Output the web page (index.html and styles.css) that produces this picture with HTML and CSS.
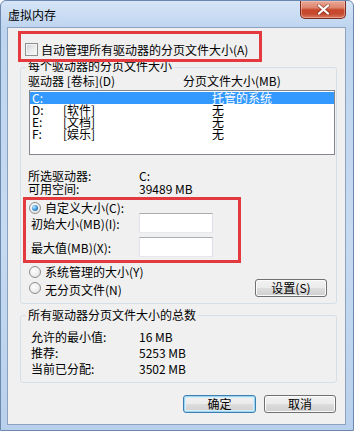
FILE: index.html
```html
<!DOCTYPE html>
<html lang="zh-CN">
<head>
<meta charset="utf-8">
<title>虚拟内存</title>
<link rel="stylesheet" href="styles.css">
</head>
<body>
<div class="window">
  <div class="titlebar">
    <span class="title">虚拟内存</span>
    <span class="close"><svg width="13" height="11" viewBox="0 0 13 11"><path d="M2 1.5L11 9.5M11 1.5L2 9.5" stroke="#5a1d14" stroke-width="4" stroke-linecap="round" opacity=".4"/><path d="M2 1.5L11 9.5M11 1.5L2 9.5" stroke="#fff" stroke-width="2.2" stroke-linecap="round"/></svg></span>
  </div>
  <div class="client">
    <div class="auto"><span class="checkbox"></span><span>自动管理所有驱动器的分页文件大小(A)</span></div>

    <div class="group g1">
      <div class="group-title">每个驱动器的分页文件大小</div>
      <div class="cols"><span>驱动器 [卷标](D)</span><span>分页文件大小(MB)</span></div>
      <div class="listbox">
        <div class="item sel"><span>C:</span><span></span><span>托管的系统</span></div>
        <div class="item"><span>D:</span><span>[软件]</span><span>无</span></div>
        <div class="item"><span>E:</span><span>[文档]</span><span>无</span></div>
        <div class="item"><span>F:</span><span>[娱乐]</span><span>无</span></div>
      </div>
      <div class="info">
        <span>所选驱动器:</span><span>C:</span>
        <span>可用空间:</span><span>39489 MB</span>
      </div>
      <div class="radio-row first"><span class="radio on"></span><span>自定义大小(C):</span></div>
      <div class="field"><span class="flabel">初始大小(MB)(I):</span><span class="textbox"></span></div>
      <div class="field"><span class="flabel">最大值(MB)(X):</span><span class="textbox"></span></div>
      <div class="radio-row second"><span class="radio"></span><span>系统管理的大小(Y)</span></div>
      <div class="last-row">
        <div class="radio-row inline"><span class="radio"></span><span class="shift">无分页文件(N)</span></div>
        <span class="btn set">设置(S)</span>
      </div>
    </div>

    <div class="group g2">
      <div class="group-title">所有驱动器分页文件大小的总数</div>
      <div class="totals">
        <span>允许的最小值:</span><span>16 MB</span>
        <span>推荐:</span><span>5253 MB</span>
        <span>当前已分配:</span><span>3502 MB</span>
      </div>
    </div>

    <div class="buttons">
      <span class="btn ok">确定</span>
      <span class="btn cancel">取消</span>
    </div>
  </div>
  <div class="mark m1"></div>
  <div class="mark m2"></div>
</div>
</body>
</html>
```
FILE: styles.css
```css
* { box-sizing: border-box; }
html, body { margin: 0; padding: 0; }
body {
  width: 354px;
  height: 431px;
  overflow: hidden;
  background: #ffffff;
  font-family: "Noto Sans CJK SC", "Noto Sans", sans-serif;
  font-size: 12px;
  color: #000;
}
.window {
  position: relative;
  width: 354px;
  height: 431px;
  display: flex;
  flex-direction: column;
  border: 1px solid #6b88ae;
  border-radius: 6px 6px 0 0;
  background: linear-gradient(180deg, #d6e5f7 0, #bfd5ef 26px, #c6daf1 55%, #b9d0ec 100%);
  padding: 0 7px 5px 6px;
}
.titlebar {
  height: 26px;
  display: flex;
  justify-content: space-between;
  align-items: flex-start;
}
.title {
  margin: 7px 0 0 1px;
  line-height: 14px;
}
.close {
  width: 46px;
  height: 18px;
  border: 1px solid #7a2c22;
  border-top: none;
  border-radius: 0 0 5px 5px;
  background: linear-gradient(180deg, #e9a897 0%, #de846e 40%, #c9462b 52%, #c54a2f 75%, #da7a5e 100%);
  display: flex;
  align-items: center;
  justify-content: center;
  box-shadow: inset 0 0 0 1px rgba(255, 210, 200, .45);
}
.client {
  flex: 1;
  border: 1px solid #8ca2bf;
  background: #f0f0f0;
  display: flex;
  flex-direction: column;
}
.auto {
  display: flex;
  align-items: center;
  gap: 3px;
  height: 13px;
  line-height: 13px;
  margin: 15px 0 0 17px;
}
.checkbox {
  width: 13px;
  height: 13px;
  flex: none;
  border: 1px solid #8e8f8f;
  background: linear-gradient(135deg, #cfd2d6 0%, #eceef0 60%, #f8f8f8 100%);
  box-shadow: inset 0 0 0 1px #f4f4f4;
}
.group {
  margin: 11px 8px 0 12px;
  border: 1px solid #d5dfe5;
  border-radius: 3px;
}
.g1 { padding-bottom: 6px; }
.g2 { padding-bottom: 5px; }
.group-title {
  width: fit-content;
  margin: -8px 0 0 5px;
  padding: 0 2px;
  line-height: 12px;
  background: #f0f0f0;
}
.g2 .group-title { margin-top: -7px; }
.cols {
  display: grid;
  grid-template-columns: 155px auto;
  margin: 2px 0 0 7px;
  line-height: 14px;
}
.listbox {
  margin: 2px 1px 0 8px;
  height: 65px;
  border: 1px solid #828790;
  background: #fff;
  padding-top: 1px;
}
.item {
  display: grid;
  grid-template-columns: 31px 149px auto;
  height: 12px;
  line-height: 12px;
  padding-left: 2px;
}
.item.sel {
  background: #3399ff;
  color: #fff;
}
.info {
  display: grid;
  grid-template-columns: 111px auto;
  margin: 14px 0 0 7px;
  line-height: 13px;
}
.radio-row {
  display: flex;
  align-items: center;
  gap: 4px;
  height: 13px;
  line-height: 13px;
}
.radio-row.first { margin: 6px 0 0 8px; }
.radio-row.second { margin: 8px 0 0 8px; }
.radio {
  position: relative;
  width: 12px;
  height: 12px;
  flex: none;
  border-radius: 50%;
  border: 1px solid #8e8f8f;
  background: radial-gradient(circle at 40% 40%, #ffffff 0%, #ececec 55%, #d2d2d2 100%);
}
.radio.on::after {
  content: "";
  position: absolute;
  left: 2px;
  top: 2px;
  width: 6px;
  height: 6px;
  border-radius: 50%;
  background: radial-gradient(circle at 35% 35%, #c6ecff 0%, #4a9ee0 45%, #14508f 100%);
}
.field {
  display: flex;
  align-items: center;
  height: 20px;
  margin: -1px 0 0 10px;
}
.field + .field { margin-top: 4px; }
.flabel {
  width: 108px;
  line-height: 14px;
  padding-top: 2px;
}
.textbox {
  width: 74px;
  height: 20px;
  background: #fff;
  border: 1px solid;
  border-color: #abadb3 #dbdfe6 #e3e9ef #e2e3ea;
}
.last-row {
  display: flex;
  align-items: center;
  justify-content: space-between;
  height: 18px;
  margin: 1px 9px 0 8px;
}
.shift { padding-top: 2px; }
.btn {
  display: flex;
  align-items: center;
  justify-content: center;
  height: 18px;
  line-height: 14px;
  border: 1px solid #707070;
  border-radius: 3px;
  background: linear-gradient(180deg, #f2f2f2 0%, #ebebeb 48%, #dddddd 52%, #cfcfcf 100%);
  box-shadow: inset 0 0 0 1px #fbfbfb;
}
.set { width: 72px; }
.totals {
  display: grid;
  grid-template-columns: 108px auto;
  margin: 8px 0 0 10px;
  line-height: 16px;
}
.buttons {
  display: flex;
  justify-content: flex-end;
  gap: 8px;
  margin-top: 12px;
  padding-right: 9px;
}
.ok {
  width: 73px;
  border-color: #3c7fb1;
  box-shadow: inset 0 0 0 1px #9fd5f3, inset 0 0 0 2px #d6eefb;
}
.cancel { width: 72px; }
.mark {
  position: absolute;
  border: 3px solid #e23a3e;
}
.m1 { left: 17px; top: 30px; width: 244px; height: 31px; }
.m2 { left: 22px; top: 196px; width: 218px; height: 66px; }
```
